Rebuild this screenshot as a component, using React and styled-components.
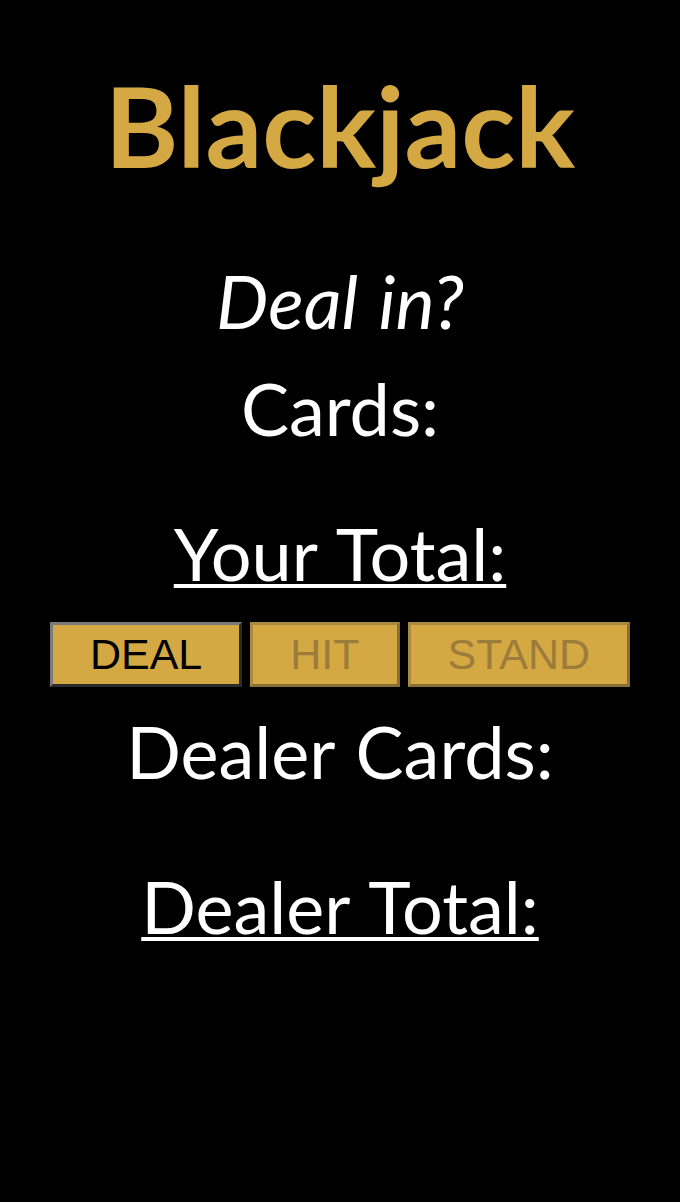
import React from "react";
import styled, { createGlobalStyle } from "styled-components";

const Global = createGlobalStyle`
  html, body { margin: 0; padding: 0; background: #000; }
  body { font-family: "Trebuchet MS", Lato, "DejaVu Sans", sans-serif; color: #fff; }
`;

const Page = styled.main`
  width: 680px;
  min-height: 1202px;
  background: #000;
  display: flex;
  flex-direction: column;
  align-items: center;
`;

const Title = styled.h1`
  margin: 69px 0 0;
  font-size: 112px;
  line-height: 112px;
  font-weight: 700;
  color: #d4a843;
`;

const Heading = styled.h2`
  margin: ${(p) => p.$mt || 0}px 0 0;
  font-size: ${(p) => (p.$italic ? 74 : 72)}px;
  line-height: 80px;
  font-weight: 400;
  font-style: ${(p) => (p.$italic ? "italic" : "normal")};
  word-spacing: 3px;
  text-decoration: ${(p) => (p.$underline ? "underline" : "none")};
  text-decoration-thickness: 4px;
  text-underline-offset: 3px;
  color: #fff;
`;

const Controls = styled.div`
  display: flex;
  gap: 8px;
  margin-top: 29px;
`;

const Button = styled.button`
  box-sizing: border-box;
  height: 65px;
  padding: 0 37px;
  font-family: "Liberation Sans", Arial, sans-serif;
  font-size: 43px;
  background: #d4a843;
  color: ${(p) => (p.disabled ? "#9c7c3a" : "#000")};
  border: 3px solid;
  border-color: ${(p) =>
    p.disabled
      ? "#a98a41 #8a6f33 #8a6f33 #a98a41"
      : "#7a7a7a #2b2b2b #2b2b2b #7a7a7a"};
  cursor: pointer;
`;

export default function App() {
  return (
    <>
      <Global />
      <Page>
        <Title>Blackjack</Title>
        <Heading $italic $mt={80}>Deal in?</Heading>
        <Heading $mt={27}>Cards:</Heading>
        <Heading $underline $mt={65}>Your Total:</Heading>
        <Controls>
          <Button>DEAL</Button>
          <Button disabled>HIT</Button>
          <Button disabled>STAND</Button>
        </Controls>
        <Heading $mt={24}>Dealer Cards:</Heading>
        <Heading $underline $mt={75}>Dealer Total:</Heading>
      </Page>
    </>
  );
}
